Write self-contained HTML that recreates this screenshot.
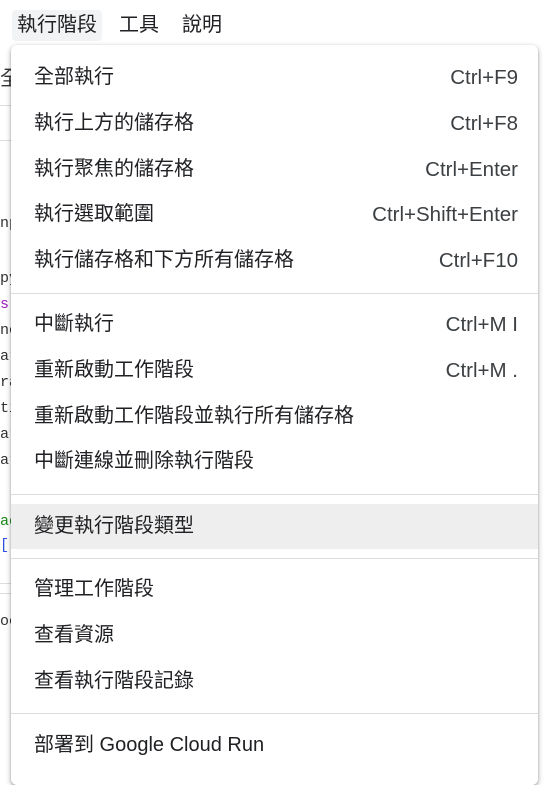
<!DOCTYPE html>
<html><head><meta charset="utf-8"><style>
body{margin:0;width:545px;height:777px;background:#fff;position:relative;overflow:hidden;font-family:"Liberation Sans","Noto Sans CJK TC",sans-serif;color:#202124}
.top{position:absolute;top:0;left:0;right:0;height:44px}
.mi{position:absolute;top:10px;font-size:20px;line-height:31px;padding:0 5px;border-radius:4px}
.bg{position:absolute;left:0;font-family:"Liberation Mono",monospace;font-size:15px;color:#333}
.hl{position:absolute;left:0;width:11px;height:1px;background:#ddd}
.menu{position:absolute;left:11px;top:45px;width:527px;height:740px;background:#fff;border-radius:6px;box-shadow:0 2px 6px rgba(0,0,0,.3),0 1px 2px rgba(0,0,0,.2)}
.it{position:absolute;left:0;right:0;height:45px;font-size:20px;line-height:45px}
.it .t{position:absolute;left:23px}
.it .s{position:absolute;right:20px;color:#3c4043;font-size:20.5px}
.dv{position:absolute;left:0;right:0;height:1px;background:#dadce0}
</style></head><body>
<div class="top">
<span class="mi" style="left:12px;background:#f1f3f4">執行階段</span>
<span class="mi" style="left:114px">工具</span>
<span class="mi" style="left:177px">說明</span>
</div>
<div class="hl" style="top:105px"></div>
<div class="hl" style="top:140px"></div>
<div class="bg" style="top:62px;font-size:20px;font-family:'Liberation Sans','Noto Sans CJK TC',sans-serif">全</div>
<div class="bg" style="top:215px">np</div>
<div class="bg" style="top:270px">py</div>
<div class="bg" style="top:296px;color:#a020c0">s</div>
<div class="bg" style="top:322px">nc</div>
<div class="bg" style="top:348px">ar</div>
<div class="bg" style="top:374px">ra</div>
<div class="bg" style="top:400px">ti</div>
<div class="bg" style="top:426px">ar</div>
<div class="bg" style="top:452px">ar</div>
<div class="bg" style="top:513px;color:#1a8a1a">ad</div>
<div class="bg" style="top:537px;color:#3050e0">[</div>
<div class="hl" style="top:583px"></div>
<div class="hl" style="top:593px"></div>
<div class="bg" style="top:613px">oc</div>
<div class="menu">
<div class="it" style="top:10px"><span class="t">全部執行</span><span class="s">Ctrl+F9</span></div>
<div class="it" style="top:56px"><span class="t">執行上方的儲存格</span><span class="s">Ctrl+F8</span></div>
<div class="it" style="top:102px"><span class="t">執行聚焦的儲存格</span><span class="s">Ctrl+Enter</span></div>
<div class="it" style="top:147px"><span class="t">執行選取範圍</span><span class="s">Ctrl+Shift+Enter</span></div>
<div class="it" style="top:193px"><span class="t">執行儲存格和下方所有儲存格</span><span class="s">Ctrl+F10</span></div>
<div class="dv" style="top:248px"></div>
<div class="it" style="top:257px"><span class="t">中斷執行</span><span class="s">Ctrl+M I</span></div>
<div class="it" style="top:303px"><span class="t">重新啟動工作階段</span><span class="s">Ctrl+M .</span></div>
<div class="it" style="top:349px"><span class="t">重新啟動工作階段並執行所有儲存格</span></div>
<div class="it" style="top:394px"><span class="t">中斷連線並刪除執行階段</span></div>
<div class="dv" style="top:449px"></div>
<div class="it" style="top:459px;background:#eeeeee"><span class="t">變更執行階段類型</span></div>
<div class="dv" style="top:513px"></div>
<div class="it" style="top:522px"><span class="t">管理工作階段</span></div>
<div class="it" style="top:568px"><span class="t">查看資源</span></div>
<div class="it" style="top:614px"><span class="t">查看執行階段記錄</span></div>
<div class="dv" style="top:668px"></div>
<div class="it" style="top:678px"><span class="t">部署到 Google Cloud Run</span></div>
</div>
</body></html>
